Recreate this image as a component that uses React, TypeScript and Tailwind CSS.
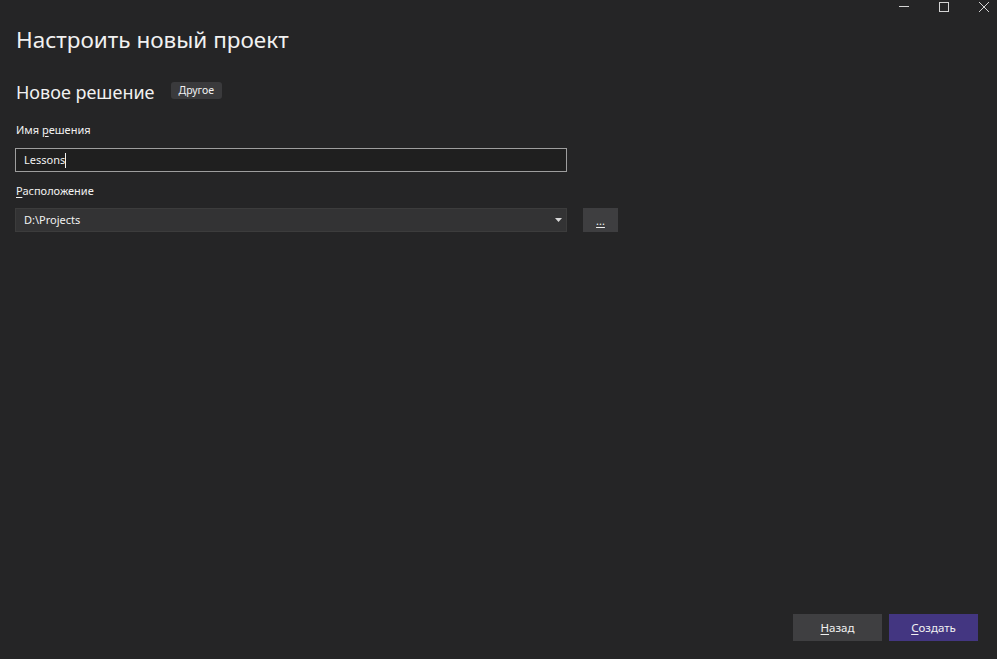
import React from "react";

const font = { fontFamily: '"Noto Sans", "Open Sans", sans-serif' };

const WindowControls = () => (
  <div className="flex justify-end items-start gap-[30px] h-[24px] pr-[8px] pt-[2px] text-[#d4d4d4]">
    <svg width="10" height="10" viewBox="0 0 10 10">
      <path d="M0 4.5h10" stroke="currentColor" strokeWidth="1" />
    </svg>
    <svg width="10" height="10" viewBox="0 0 10 10">
      <rect x="0.5" y="0.5" width="9" height="9" fill="none" stroke="currentColor" strokeWidth="1" />
    </svg>
    <svg width="10" height="10" viewBox="0 0 10 10">
      <path d="M0 0l10 10M10 0L0 10" stroke="currentColor" strokeWidth="1" />
    </svg>
  </div>
);

export default function App() {
  return (
    <div
      className="w-[997px] h-[659px] bg-[#252526] text-[#f1f1f1] flex flex-col overflow-hidden"
      style={font}
    >
      <WindowControls />
      <div className="px-[15px] flex flex-col">
        <h1 className="text-[22.5px] leading-[32px] font-normal ml-[1px]">Настроить новый проект</h1>
        <div className="flex items-start gap-[16px] mt-[24px] ml-[1px]">
          <h2 className="text-[18px] leading-[24px]">Новое решение</h2>
          <span className="bg-[#3a3a3c] rounded-[3px] px-[8px] h-[17px] mt-[2px] flex items-center text-[10.5px] leading-none">
            Другое
          </span>
        </div>
        <label className="text-[11px] leading-[16px] mt-[18px] ml-[1px]">
          Имя <span className="underline underline-offset-2">р</span>ешения
        </label>
        <div className="mt-[10px] w-[552px] h-[24px] border border-[#9e9e9e] bg-[#1f1f1f] flex items-center pl-[8px] text-[11px]">
          <span>Lessons</span>
          <span className="w-px h-[15px] bg-[#f1f1f1]" />
        </div>
        <label className="text-[11px] leading-[16px] mt-[11px] ml-[1px]">
          <span className="underline underline-offset-2">Р</span>асположение
        </label>
        <div className="flex mt-[9px] gap-[16px]">
          <div className="w-[552px] h-[24px] border border-[#3c3c3c] bg-[#333334] flex items-center justify-between pl-[8px] pr-[3px] text-[11px]">
            <span>D:\Projects</span>
            <svg width="7" height="4" viewBox="0 0 7 4" className="mr-[1px]">
              <path d="M0 0h7L3.5 4z" fill="#d8d8d8" />
            </svg>
          </div>
          <button className="w-[35px] h-[24px] bg-[#3e3e40] text-[11px] leading-none flex items-end justify-center pb-[6px]">
            <span className="underline underline-offset-2">...</span>
          </button>
        </div>
      </div>
      <div className="mt-auto flex justify-end gap-[7px] pr-[19px] pb-[18px]">
        <button className="w-[89px] h-[27px] bg-[#3f3f41] text-[11.5px] text-[#f1f1f1]">
          <span className="underline underline-offset-2">Н</span>азад
        </button>
        <button className="w-[89px] h-[27px] bg-[#433681] text-[11.5px] text-[#f1f1f1]">
          <span className="underline underline-offset-2">С</span>оздать
        </button>
      </div>
    </div>
  );
}
